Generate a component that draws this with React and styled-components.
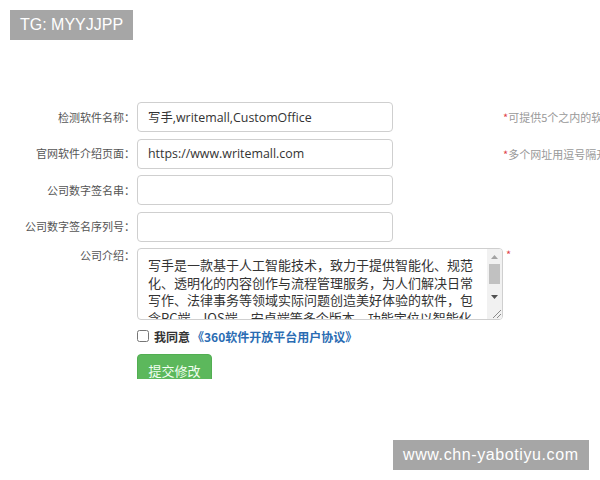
import React from "react";
import styled, { createGlobalStyle } from "styled-components";

const Global = createGlobalStyle`
  html, body { margin: 0; padding: 0; background: #fff; }
  body { width: 600px; height: 480px; overflow: hidden; font-family: "Noto Sans CJK SC", "Open Sans", sans-serif; }
`;

const Page = styled.div`
  position: relative;
  width: 600px;
  height: 480px;
  overflow: hidden;
`;

const Watermark = styled.div`
  position: absolute;
  background: #a6a6a6;
  color: #fff;
  font-family: "Liberation Sans", Arial, sans-serif;
  font-size: 16px;
  letter-spacing: ${(p) => p.$spacing || 0}px;
  height: 30px;
  line-height: 30px;
  padding: 0 10px;
  white-space: nowrap;
  top: ${(p) => p.$top}px;
  left: ${(p) => p.$left}px;
`;

const Form = styled.div`
  padding-top: 102px;
  display: flex;
  flex-direction: column;
`;

const Rows = styled.div`
  display: flex;
  flex-direction: column;
  gap: 6.5px;
`;

const Row = styled.div`
  display: flex;
  align-items: ${(p) => (p.$top ? "flex-start" : "center")};
  white-space: nowrap;
`;

const Label = styled.label`
  width: 135px;
  margin-right: 2px;
  flex: none;
  text-align: right;
  font-size: 11px;
  color: #555;
  line-height: 15px;
  font-family: "Noto Sans CJK SC", sans-serif;
`;

const Input = styled.input`
  box-sizing: border-box;
  width: 256px;
  height: 30px;
  flex: none;
  border: 1px solid #cfcfcf;
  border-radius: 4px;
  padding: 0 10px;
  font-family: "Open Sans", "Noto Sans CJK SC", sans-serif;
  font-size: 12.4px;
  color: #333;
  outline: none;
  background: #fff;
`;

const Hint = styled.span`
  margin-left: 110px;
  font-size: 11px;
  color: #999;
  font-family: "Noto Sans CJK SC", sans-serif;
`;

const Star = styled.span`
  color: #e0434b;
`;

const AreaBox = styled.div`
  box-sizing: border-box;
  width: 366px;
  height: 72px;
  flex: none;
  display: flex;
  border: 1px solid #cfcfcf;
  border-radius: 4px;
  overflow: hidden;
  background: #fff;
`;

const AreaText = styled.textarea`
  flex: 1;
  min-width: 0;
  border: none;
  margin: 0;
  padding: 7px 11px 0 10px;
  font-family: "Noto Sans CJK SC", sans-serif;
  font-size: 13px;
  line-height: 17.7px;
  color: #333;
  overflow: hidden;
  resize: none;
  outline: none;
  background: transparent;
`;

const ScrollBar = styled.div`
  width: 15px;
  flex: none;
  display: flex;
  flex-direction: column;
  background: #f1f1f1;
`;

const ScrollBtn = styled.div`
  height: 15px;
  flex: none;
  display: flex;
  align-items: center;
  justify-content: center;
`;

const Track = styled.div`
  flex: 1;
  display: flex;
  flex-direction: column;
  padding: 0 2px;
`;

const Thumb = styled.div`
  height: 20px;
  background: #c1c1c1;
`;

const Corner = styled.div`
  height: 15px;
  flex: none;
  background: #f1f1f1;
  display: flex;
  align-items: flex-end;
  justify-content: flex-end;
`;

const AreaStar = styled.span`
  color: #e0434b;
  font-size: 11px;
  margin-left: 3px;
  line-height: 1;
  margin-top: 1px;
`;

const Agree = styled.div`
  display: flex;
  align-items: center;
  margin-left: 137px;
  margin-top: 6px;
  height: 20px;
  font-size: 12px;
  font-weight: bold;
  color: #333;
  font-family: "Noto Sans CJK SC", sans-serif;
  white-space: nowrap;
`;

const Check = styled.input`
  width: 12px;
  height: 12px;
  margin: 0 5px 0 0;
`;

const Link = styled.a`
  color: #2a6cb3;
  text-decoration: none;
  margin-left: 2px;
`;

const ButtonClip = styled.div`
  margin-left: 137px;
  margin-top: 7.5px;
  height: 25px;
  overflow: hidden;
`;

const Submit = styled.button`
  width: 75px;
  height: 34px;
  border: 1px solid #52ae52;
  border-radius: 4px;
  background: #5cb85c;
  color: #f2fff2;
  font-family: "Noto Sans CJK SC", sans-serif;
  font-size: 13px;
  padding: 0;
  cursor: pointer;
`;

const intro =
  "写手是一款基于人工智能技术，致力于提供智能化、规范化、透明化的内容创作与流程管理服务，为人们解决日常写作、法律事务等领域实际问题创造美好体验的软件，包含PC端、IOS端、安卓端等多个版本，功能定位以智能化写作为核心，为用户提供高效便捷的服务。";

export default function App() {
  return (
    <>
      <Global />
      <Page>
        <Form>
          <Rows>
            <Row>
              <Label>检测软件名称：</Label>
              <Input defaultValue="写手,writemall,CustomOffice" />
              <Hint>
                <Star>*</Star>可提供5个之内的软件名称，用逗号隔开
              </Hint>
            </Row>
            <Row>
              <Label>官网软件介绍页面：</Label>
              <Input defaultValue="https://www.writemall.com" />
              <Hint>
                <Star>*</Star>多个网址用逗号隔开
              </Hint>
            </Row>
            <Row>
              <Label>公司数字签名串：</Label>
              <Input />
            </Row>
            <Row>
              <Label>公司数字签名序列号：</Label>
              <Input />
            </Row>
            <Row $top>
              <Label>公司介绍：</Label>
              <AreaBox>
                <AreaText defaultValue={intro} />
                <ScrollBar>
                  <ScrollBtn>
                    <svg width="7" height="4" viewBox="0 0 7 4">
                      <path d="M0 4 L3.5 0 L7 4 Z" fill="#a3a3a3" />
                    </svg>
                  </ScrollBtn>
                  <Track>
                    <Thumb />
                  </Track>
                  <ScrollBtn>
                    <svg width="7" height="4" viewBox="0 0 7 4">
                      <path d="M0 0 L3.5 4 L7 0 Z" fill="#505050" />
                    </svg>
                  </ScrollBtn>
                  <Corner>
                    <svg width="12" height="12" viewBox="0 0 12 12">
                      <path d="M11 3 L3 11 M11 7 L7 11" stroke="#8a8a8a" strokeWidth="1" />
                    </svg>
                  </Corner>
                </ScrollBar>
              </AreaBox>
              <AreaStar>*</AreaStar>
            </Row>
          </Rows>
          <Agree>
            <Check type="checkbox" />
            我同意<Link href="#">《360软件开放平台用户协议》</Link>
          </Agree>
          <ButtonClip>
            <Submit>提交修改</Submit>
          </ButtonClip>
        </Form>
        <Watermark $top={10} $left={10}>TG: MYYJJPP</Watermark>
        <Watermark $top={440} $left={393} $spacing={0.6}>www.chn-yabotiyu.com</Watermark>
      </Page>
    </>
  );
}
